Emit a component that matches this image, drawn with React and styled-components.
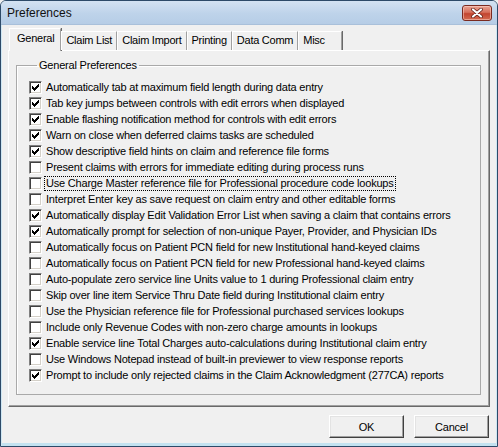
import React from "react";
import styled, { createGlobalStyle } from "styled-components";

const GlobalStyle = createGlobalStyle`
  html, body { margin: 0; padding: 0; background: #f0f0f0; }
  * { box-sizing: border-box; }
`;

const Window = styled.div`
  width: 498px;
  height: 447px;
  display: flex;
  flex-direction: column;
  background: #f0f0f0;
  border: 1px solid #2d4a68;
  border-radius: 6px 6px 0 0;
  overflow: hidden;
  box-shadow: inset 1px 0 #cfe7f3, inset -1px 0 #cfe7f3, inset 0 -3px #c3e2f0;
  font-family: "Liberation Sans", Arial, sans-serif;
`;

const TitleBar = styled.div`
  height: 24px;
  flex: none;
  display: flex;
  align-items: center;
  padding: 0 5px 0 6px;
  background: linear-gradient(#d3e2f2, #bed3ea 55%, #b6cde6);
  border-bottom: 1px solid #a9c0da;
`;

const Title = styled.div`
  flex: 1;
  font-size: 12px;
  color: #111;
`;

const CloseButton = styled.div`
  width: 30px;
  height: 16px;
  border-radius: 3px;
  border: 1px solid #7a2a20;
  background: linear-gradient(#eaa392, #d6705c 45%, #c24530 55%, #d46a50);
  display: flex;
  align-items: center;
  justify-content: center;
  box-shadow: inset 0 0 0 1px rgba(255, 220, 210, 0.5);
`;

const Body = styled.div`
  flex: 1;
  display: flex;
  flex-direction: column;
  padding: 3px 7px 0 7px;
`;

const TabStrip = styled.div`
  height: 22px;
  display: flex;
  align-items: flex-end;
  padding-left: 1px;
  position: relative;
  z-index: 1;
`;

const Tab = styled.div`
  height: ${(p) => (p.$active ? "23px" : "19px")};
  margin-bottom: ${(p) => (p.$active ? "-1px" : "0")};
  padding: ${(p) => (p.$active ? "3px 6px 0 7px" : "2px 4px 0 4px")};
  min-width: ${(p) => p.$minWidth || "auto"};
  font-size: 11px;
  letter-spacing: -0.25px;
  color: #000;
  background: #f0f0f0;
  border-top: 1px solid #fff;
  border-left: 1px solid #fff;
  border-right: 1px solid #a0a0a0;
  box-shadow: 1px 0 #696969;
  margin-right: 1px;
  white-space: nowrap;
  &:not(:first-child) { margin-left: -1px; }
`;

const Panel = styled.div`
  height: 357px;
  flex: none;
  display: flex;
  flex-direction: column;
  padding: 8px 8px 0 7px;
  border-top: 1px solid #fff;
  border-left: 1px solid #fff;
  border-right: 1px solid #696969;
  border-bottom: 1px solid #696969;
  box-shadow: inset -1px -1px #a0a0a0;
`;

const Group = styled.fieldset`
  margin: 0;
  padding: 7px 0 11px 12px;
  border: 1px solid #a9a9a9;
  box-shadow: 1px 1px #fff inset;
  min-width: 0;
`;

const Legend = styled.legend`
  margin-left: 8px;
  padding: 0 2px;
  font-size: 11px;
  line-height: 13px;
  letter-spacing: -0.2px;
  color: #000;
`;

const Row = styled.div`
  height: 16px;
  display: flex;
  align-items: center;
  gap: 2px;
`;

const Box = styled.div`
  width: 13px;
  height: 13px;
  flex: none;
  background: #fff;
  border: 1px solid;
  border-color: #808080 #fff #fff #808080;
  box-shadow: inset 1px 1px #404040, inset -1px -1px #d4d0c8;
  display: flex;
  align-items: center;
  justify-content: center;
`;

const Label = styled.span`
  font-size: 11px;
  line-height: 13px;
  letter-spacing: -0.2px;
  color: #000;
  padding: 0 1px;
  border: 1px dotted ${(p) => (p.$focused ? "#000" : "transparent")};
  white-space: nowrap;
`;

const Footer = styled.div`
  display: flex;
  justify-content: flex-end;
  gap: 10px;
  padding: 8px 1px 0 0;
`;

const Button = styled.div`
  width: 75px;
  height: 23px;
  display: flex;
  align-items: center;
  justify-content: center;
  font-size: 11px;
  letter-spacing: -0.2px;
  color: #000;
  background: #f0f0f0;
  border: 1px solid;
  border-color: #fff #404040 #404040 #fff;
  box-shadow: inset -1px -1px #a0a0a0, inset 1px 1px #e3e3e3;
`;

const CHECK = [
  [6],
  [5, 6],
  [0, 4, 5, 6],
  [0, 1, 3, 4, 5],
  [0, 1, 2, 3, 4],
  [1, 2, 3],
  [2],
];

function CheckMark() {
  return (
    <svg width="7" height="7" viewBox="0 0 7 7" shapeRendering="crispEdges">
      {CHECK.flatMap((xs, y) =>
        xs.map((x) => <rect key={`${x}-${y}`} x={x} y={y} width="1" height="1" fill="#000" />)
      )}
    </svg>
  );
}

function CloseGlyph() {
  return (
    <svg width="12" height="10" viewBox="0 0 12 10">
      <path d="M2 1.5 L10 8.5 M10 1.5 L2 8.5" stroke="#5a1a12" strokeWidth="3.6" strokeLinecap="round" />
      <path d="M2 1.5 L10 8.5 M10 1.5 L2 8.5" stroke="#fff" strokeWidth="2.2" strokeLinecap="round" />
    </svg>
  );
}

const TABS = [
  { label: "General", active: true },
  { label: "Claim List" },
  { label: "Claim Import" },
  { label: "Printing" },
  { label: "Data Comm" },
  { label: "Misc", minWidth: "44px" },
];

const OPTIONS = [
  ["Automatically tab at maximum field length during data entry", true],
  ["Tab key jumps between controls with edit errors when displayed", true],
  ["Enable flashing notification method for controls with edit errors", true],
  ["Warn on close when deferred claims tasks are scheduled", true],
  ["Show descriptive field hints on claim and reference file forms", true],
  ["Present claims with errors for immediate editing during process runs", false],
  ["Use Charge Master reference file for Professional procedure code lookups", false, true],
  ["Interpret Enter key as save request on claim entry and other editable forms", false],
  ["Automatically display Edit Validation Error List when saving a claim that contains errors", true],
  ["Automatically prompt for selection of non-unique Payer, Provider, and Physician IDs", true],
  ["Automatically focus on Patient PCN field for new Institutional hand-keyed claims", false],
  ["Automatically focus on Patient PCN field for new Professional hand-keyed claims", false],
  ["Auto-populate zero service line Units value to 1 during Professional claim entry", false],
  ["Skip over line item Service Thru Date field during Institutional claim entry", false],
  ["Use the Physician reference file for Professional purchased services lookups", false],
  ["Include only Revenue Codes with non-zero charge amounts in lookups", false],
  ["Enable service line Total Charges auto-calculations during Institutional claim entry", true],
  ["Use Windows Notepad instead of built-in previewer to view response reports", false],
  ["Prompt to include only rejected claims in the Claim Acknowledgment (277CA) reports", true],
];

export default function App() {
  return (
    <>
      <GlobalStyle />
      <Window>
        <TitleBar>
          <Title>Preferences</Title>
          <CloseButton>
            <CloseGlyph />
          </CloseButton>
        </TitleBar>
        <Body>
          <TabStrip>
            {TABS.map((t) => (
              <Tab key={t.label} $active={t.active} $minWidth={t.minWidth}>
                {t.label}
              </Tab>
            ))}
          </TabStrip>
          <Panel>
            <Group>
              <Legend>General Preferences</Legend>
              {OPTIONS.map(([text, checked, focused]) => (
                <Row key={text}>
                  <Box>{checked && <CheckMark />}</Box>
                  <Label $focused={focused}>{text}</Label>
                </Row>
              ))}
            </Group>
          </Panel>
          <Footer>
            <Button>OK</Button>
            <Button>Cancel</Button>
          </Footer>
        </Body>
      </Window>
    </>
  );
}
